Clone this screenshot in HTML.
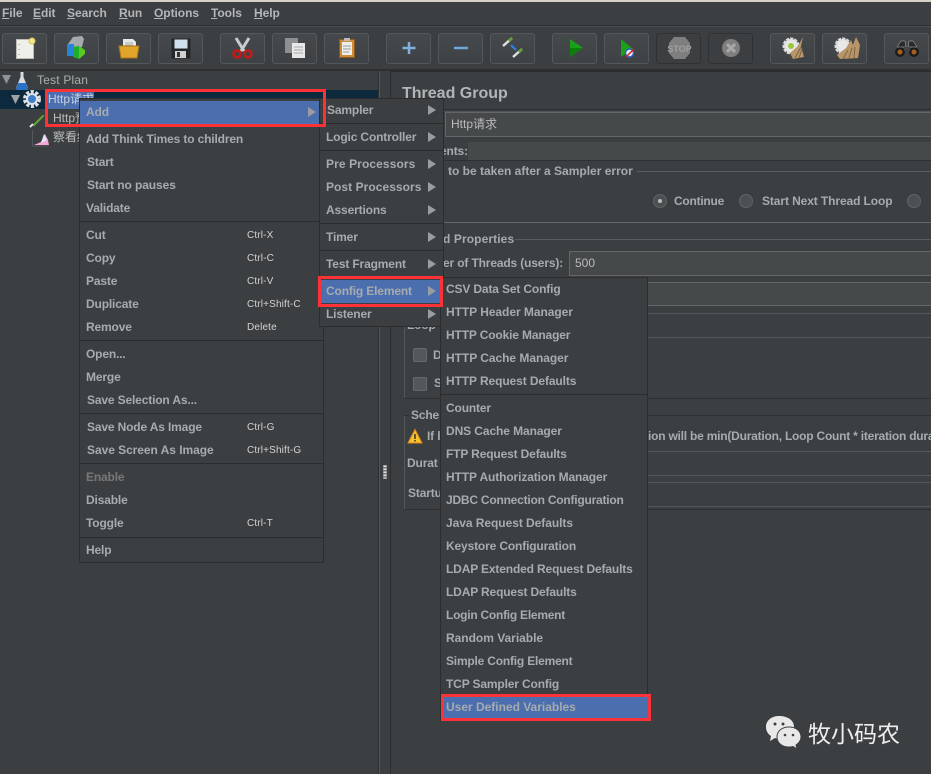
<!DOCTYPE html>
<html><head><meta charset="utf-8">
<style>
html,body{margin:0;padding:0;background:#3c3f41}
#r{position:relative;width:931px;height:774px;overflow:hidden;background:#3c3f41;font:bold 12px/16px "Liberation Sans","Noto Sans CJK SC",sans-serif;color:#a6abae;letter-spacing:-.15px}
#r div{position:absolute;box-sizing:border-box}
.t{white-space:nowrap;height:16px}
.b{width:45px;height:31px;top:33px;border:1px solid #54585b;border-radius:3px;background:linear-gradient(#45494c,#3f4245)}
.d{background:#3c3f41;border-color:#2f3133}
.l{height:1px;background:#5a5d5f}
.k{height:1px;background:#2d2f31}
.f{background:#45494a;border:1px solid #646667}
.n{font-weight:normal;color:#bbb;letter-spacing:0}
.m{background:#3c3f41;border:1px solid #2b2d2e}
.s{height:1px;background:#2b2d2e}
.sc{font:normal 10px/14px "Liberation Sans",sans-serif;color:#d2d2d2;white-space:nowrap;height:14px;letter-spacing:.15px}
.a{width:0;height:0;border-left:8px solid #9a9d9f;border-top:5px solid transparent;border-bottom:5px solid transparent}
.red{border:3px solid #fb3338}
.mn{font-size:12px;color:#b4b7b9;top:5px;font-weight:bold;letter-spacing:-.05px}
.mn u{text-underline-offset:1px}
</style></head><body><div id="r">
<div style="left:0;top:0;width:931px;height:2px;background:#d8d2c4"></div>
<div class="t mn" style="left:2px"><u>F</u>ile</div>
<div class="t mn" style="left:33px"><u>E</u>dit</div>
<div class="t mn" style="left:67px"><u>S</u>earch</div>
<div class="t mn" style="left:119px"><u>R</u>un</div>
<div class="t mn" style="left:154px"><u>O</u>ptions</div>
<div class="t mn" style="left:211px"><u>T</u>ools</div>
<div class="t mn" style="left:254px"><u>H</u>elp</div>
<div class="k" style="left:0;top:25px;width:931px"></div>
<div class="l" style="left:0;top:26px;width:931px;background:#4c5052"></div>

<div class="b" style="left:2px"></div><div class="b" style="left:54px"></div><div class="b" style="left:106px"></div><div class="b" style="left:158px"></div>
<div class="b" style="left:220px"></div><div class="b" style="left:272px"></div><div class="b" style="left:324px"></div>
<div class="b" style="left:386px"></div><div class="b" style="left:438px"></div><div class="b" style="left:490px"></div>
<div class="b" style="left:552px"></div><div class="b" style="left:604px"></div><div class="b d" style="left:656px"></div><div class="b d" style="left:708px"></div>
<div class="b" style="left:770px"></div><div class="b" style="left:822px"></div><div class="b" style="left:884px"></div>
<div style="left:0;top:69px;width:931px;height:2px;background:#2d2f31"></div>

<!-- tree -->
<div style="left:0;top:90px;width:379px;height:19px;background:#0d293e"></div>
<div style="left:47px;top:90px;width:47px;height:19px;background:#4b6eaf"></div>
<div style="left:379px;top:71px;width:1px;height:703px;background:#54575a"></div>
<div style="left:378px;top:71px;width:1px;height:703px;background:#2d2f31"></div>
<div style="left:390px;top:71px;width:1px;height:703px;background:#2b2d2e"></div>
<div style="left:391px;top:71px;width:540px;height:1px;background:#2b2d2e"></div>
<div class="t n" style="left:37px;top:72px;color:#a9b0a9;letter-spacing:.2px">Test Plan</div>
<div class="t n" style="left:48px;top:91px;color:#c8d0de">Http请求</div>
<div class="t n" style="left:53px;top:110px">Http预</div>
<div class="t n" style="left:53px;top:129px">察看结</div>

<!-- right panel -->
<div class="t" style="left:402px;top:85px;height:18px;line-height:18px;font-size:16px;color:#b3b6b8;letter-spacing:0">Thread Group</div>
<div class="k" style="left:391px;top:109px;width:540px"></div>
<div class="l" style="left:391px;top:111px;width:540px;background:#505356"></div>
<div class="f" style="left:445px;top:112px;width:490px;height:25px"></div>
<div class="t n" style="left:451px;top:116px">Http请求</div>
<div style="left:468px;top:142px;width:463px;height:18px;background:#45494a"></div>
<div class="k" style="left:391px;top:160px;width:540px"></div>
<div class="t" style="left:440px;top:143px">ents:</div>
<div class="t" style="left:448px;top:163px;letter-spacing:0">to be taken after a Sampler error</div>
<div class="l" style="left:637px;top:171px;width:294px"></div>
<div style="left:653px;top:194px;width:14px;height:14px;border-radius:50%;background:#4c5052;border:1px solid #5f6366"></div>
<div style="left:658px;top:199px;width:4px;height:4px;border-radius:50%;background:#bbb"></div>
<div class="t" style="left:674px;top:193px;letter-spacing:-.25px">Continue</div>
<div style="left:739px;top:194px;width:14px;height:14px;border-radius:50%;background:#4c5052;border:1px solid #5f6366"></div>
<div class="t" style="left:762px;top:193px;letter-spacing:-.1px">Start Next Thread Loop</div>
<div style="left:907px;top:194px;width:14px;height:14px;border-radius:50%;background:#4c5052;border:1px solid #5f6366"></div>
<div class="l" style="left:443px;top:222px;width:488px;background:#66696b"></div>
<div class="t" style="left:443px;top:231px;letter-spacing:.1px">d Properties</div>
<div class="l" style="left:515px;top:239px;width:416px"></div>
<div class="t" style="left:443px;top:255px">er of Threads (users):</div>
<div class="f" style="left:569px;top:251px;width:366px;height:25px"></div>
<div class="t n" style="left:575px;top:255px">500</div>
<div style="left:648px;top:282px;width:283px;height:24px;background:#45494a;border-top:1px solid #646667;border-bottom:1px solid #646667"></div>
<div style="left:648px;top:313px;width:283px;height:25px;border-top:1px solid #55585a;border-bottom:1px solid #55585a"></div>
<div style="left:404px;top:230px;width:1px;height:169px;background:#55585a"></div>
<div class="k" style="left:404px;top:398px;width:527px"></div>
<div class="t" style="left:407px;top:317px">Loop</div>
<div style="left:413px;top:348px;width:14px;height:14px;background:#54585a;border:1px solid #666a6c;border-radius:2px"></div>
<div class="t" style="left:433px;top:347px">D</div>
<div style="left:413px;top:377px;width:14px;height:14px;background:#54585a;border:1px solid #666a6c;border-radius:2px"></div>
<div class="t" style="left:434px;top:375px">S</div>
<div style="left:404px;top:415px;width:1px;height:95px;background:#55585a"></div>
<div class="k" style="left:404px;top:415px;width:527px"></div>
<div class="k" style="left:404px;top:509px;width:527px"></div>
<div class="t" style="left:409px;top:407px;background:#3c3f41;padding:0 2px">Sche</div>
<div class="t" style="left:427px;top:428px">If l</div>
<div class="t" style="left:648px;top:428px;letter-spacing:-.22px">ion will be min(Duration, Loop Count * iteration dura</div>
<div class="t" style="left:407px;top:455px">Durat</div>
<div class="t" style="left:408px;top:485px">Startu</div>
<div style="left:648px;top:451px;width:283px;height:25px;border-top:1px solid #55585a;border-bottom:1px solid #55585a"></div>
<div style="left:648px;top:482px;width:283px;height:25px;border-top:1px solid #55585a;border-bottom:1px solid #55585a"></div>

<svg width="931" height="774" style="position:absolute;left:0;top:0">
<!-- splitter dots -->
<path d="M383 465h4v14h-4z" fill="#77797b"/><path d="M385 465.500v13" stroke="#dcdcdc" stroke-dasharray="1.500 1.500" stroke-width="3"/>
<!-- warning -->
<path d="M415 429.500l7 13.500h-14z" fill="#f7c32c" stroke="#e08a1a"/><path d="M415 434v5M415 440v1.500" stroke="#333" stroke-width="1.500"/>
<!-- tree icons -->
<path d="M2 75h9l-4.500 9z" fill="#909395"/>
<path d="M11 95h9l-4.500 9z" fill="#a0a3a5"/>
<path d="M20.500 72h3v5l4 10q.5 3-2 3h-7q-2.500 0-2-3l4-10z" fill="#d8dde2"/><path d="M18 83h8l2 7h-12z" fill="#2a70c8"/>
<circle cx="32" cy="99" r="7" fill="none" stroke="#dde0e4" stroke-width="4" stroke-dasharray="3 1.500"/><circle cx="32" cy="99" r="6" fill="#dfe3e8"/><circle cx="32" cy="99" r="4" fill="#3d7fc8"/>
<path d="M32 125l10-10 3-1-1 3-10 10z" fill="#5d9a3a" stroke="#2a2a2a" stroke-width=".5"/><path d="M30 127l3-3" stroke="#ddd" stroke-width="2"/>
<path d="M32.500 130v16h16" fill="none" stroke="#55585a"/><path d="M34 145l7-3 4-8 3 6 1 5z" fill="#f3a8d8"/><path d="M41 143l3-9 3 6z" fill="#dfe8f5"/>
<!-- toolbar icons -->
<rect x="16.500" y="39.500" width="17" height="19" fill="#f0f0ea" stroke="#bcbcb4"/><circle cx="32" cy="41" r="3" fill="#f5e58a" stroke="#d8c45a"/><path d="M19 44v1M19 49v1M19 54v1" stroke="#888"/>
<path d="M68 44l5-7 9-1 2 3-2 8-14 3z" fill="#a4aaae"/><rect x="67" y="44" width="7" height="12" fill="#2786d8"/><path d="M73 47l6-1v13l-6-2z" fill="#1fae2a"/><path d="M79 46l6 4v4l-6 5z" fill="#5ac822"/>
<path d="M123 39h10l3 3v6h-13z" fill="#e8e8e8"/><path d="M125 43h8M125 45h8" stroke="#aaa"/><path d="M119 46h20l-2 12h-16z" fill="#e2a52c" stroke="#a87818"/>
<rect x="171.500" y="38.500" width="19" height="20" fill="#24272a" rx="1"/><rect x="174.500" y="39.500" width="13" height="9" fill="#cfe0ee"/><rect x="175" y="51" width="11" height="7" fill="#d0d0d0"/><rect x="177" y="52" width="3" height="5" fill="#333"/>
<path d="M236 38l8 13M249 38l-8 13" stroke="#c9ccce" stroke-width="3"/><circle cx="237" cy="54" r="3.500" fill="none" stroke="#c81818" stroke-width="2.500"/><circle cx="248" cy="54" r="3.500" fill="none" stroke="#c81818" stroke-width="2.500"/>
<rect x="285" y="38" width="13" height="15" fill="#8d9091"/><rect x="292" y="43" width="13" height="15" fill="#e8e8e8"/><path d="M294 47h9M294 50h9M294 53h9" stroke="#aaa"/>
<rect x="339.500" y="39.500" width="15" height="18" fill="#d18a3a" stroke="#8a5a20"/><rect x="342" y="42" width="10" height="13" fill="#eeeeea"/><rect x="344" y="38" width="6" height="3" fill="#bbb"/><path d="M343 46h8M343 49h8M343 52h6" stroke="#999"/>
<path d="M409 42v12M402.500 48h13" stroke="#7fb0e2" stroke-width="2.500"/>
<path d="M454 48h14" stroke="#6fa4dc" stroke-width="2.500"/>
<path d="M503 46l9-8" stroke="#ddd" stroke-width="2.500"/><path d="M509 41l3-3" stroke="#5e9e3e" stroke-width="3"/><path d="M513 57l9-8" stroke="#ddd" stroke-width="2.500"/><path d="M519 52l3-3" stroke="#5e9e3e" stroke-width="3"/><path d="M511 45l5 5" stroke="#2f7fe6" stroke-width="2"/>
<path d="M570 39l13 9-13 9z" fill="#1aa01a"/><path d="M570 48h13l-13 9z" fill="#0b7e0b"/>
<path d="M621 39l12 10-12 8z" fill="#1aa01a"/><circle cx="629.500" cy="53" r="4" fill="#eef" stroke="#2a60c8" stroke-width="1.500"/><path d="M626 57l8-8" stroke="#d82020" stroke-width="1.500"/>
<path d="M674 37h11l5 6v10l-5 6h-11l-5-6v-10z" fill="#7f7f7f"/><text x="679.500" y="52" font-size="9" font-weight="bold" fill="#a0a0a0" text-anchor="middle" font-family="Liberation Sans" letter-spacing="0">STOP</text>
<circle cx="731" cy="48" r="9" fill="#7f7f7f"/><path d="M727 44l8 8M735 44l-8 8" stroke="#a8a8a8" stroke-width="3"/>
<circle cx="791" cy="46" r="7" fill="#e8e8e8" stroke="#ddd" stroke-width="3" stroke-dasharray="3 1"/><circle cx="791" cy="46" r="3" fill="#9ac83a"/><path d="M803 37l-2 9 3 11-11 2-3-6 8-7z" fill="#b9966a"/><path d="M801 47l-6 11M802 49l-3 9" stroke="#7e6444"/>
<circle cx="843" cy="46" r="7" fill="#e8e8e8" stroke="#ddd" stroke-width="3" stroke-dasharray="3 1"/><path d="M856 37l-3 8-2-5-5 8-9 7 3 4 18-1 2-13z" fill="#b9966a"/><path d="M848 50l-5 9M852 48l-3 10M855 47l-1 11" stroke="#7e6444"/>
<circle cx="900" cy="52" r="5" fill="#1c1c1c"/><circle cx="914" cy="52" r="5" fill="#1c1c1c"/><path d="M897 47l4-6h4l1 6zM908 47l1-6h4l4 6z" fill="#2a2a2a" stroke="#bbb" stroke-width=".5"/><rect x="904" y="47" width="6" height="4" fill="#444"/><circle cx="900" cy="52" r="2.500" fill="#a8601e"/><circle cx="914" cy="52" r="2.500" fill="#a8601e"/>
</svg>

<!-- menu 1 -->
<div class="m" style="left:79px;top:98px;width:245px;height:465px"></div>
<div style="left:80px;top:101px;width:239px;height:23px;background:#4b6eaf"></div>
<div class="t" style="left:86px;top:104px">Add</div><div class="a" style="left:308px;top:107px"></div>
<div class="t" style="left:86px;top:131px">Add Think Times to children</div>
<div class="t" style="left:87px;top:154px">Start</div>
<div class="t" style="left:87px;top:177px;letter-spacing:-.08px">Start no pauses</div>
<div class="t" style="left:86px;top:200px">Validate</div>
<div class="s" style="left:80px;top:221px;width:243px"></div>
<div class="t" style="left:86px;top:227px">Cut</div><div class="sc" style="left:247px;top:229px">Ctrl-X</div>
<div class="t" style="left:86px;top:250px">Copy</div><div class="sc" style="left:247px;top:252px">Ctrl-C</div>
<div class="t" style="left:86px;top:273px">Paste</div><div class="sc" style="left:247px;top:275px">Ctrl-V</div>
<div class="t" style="left:86px;top:296px">Duplicate</div><div class="sc" style="left:247px;top:298px">Ctrl+Shift-C</div>
<div class="t" style="left:86px;top:319px">Remove</div><div class="sc" style="left:247px;top:321px">Delete</div>
<div class="s" style="left:80px;top:340px;width:243px"></div>
<div class="t" style="left:86px;top:346px">Open...</div>
<div class="t" style="left:86px;top:369px">Merge</div>
<div class="t" style="left:87px;top:392px">Save Selection As...</div>
<div class="s" style="left:80px;top:413px;width:243px"></div>
<div class="t" style="left:87px;top:419px">Save Node As Image</div><div class="sc" style="left:247px;top:421px">Ctrl-G</div>
<div class="t" style="left:87px;top:442px;letter-spacing:-.05px">Save Screen As Image</div><div class="sc" style="left:247px;top:444px">Ctrl+Shift-G</div>
<div class="s" style="left:80px;top:463px;width:243px"></div>
<div class="t" style="left:86px;top:469px;color:#777">Enable</div>
<div class="t" style="left:86px;top:492px">Disable</div>
<div class="t" style="left:86px;top:515px">Toggle</div><div class="sc" style="left:247px;top:517px">Ctrl-T</div>
<div class="s" style="left:80px;top:537px;width:243px"></div>
<div class="t" style="left:86px;top:542px">Help</div>

<!-- menu 2 -->
<div class="m" style="left:319px;top:98px;width:125px;height:229px"></div>
<div class="t" style="left:327px;top:102px">Sampler</div><div class="a" style="left:428px;top:105px"></div>
<div class="s" style="left:320px;top:123px;width:123px"></div>
<div class="t" style="left:326px;top:129px">Logic Controller</div><div class="a" style="left:428px;top:132px"></div>
<div class="s" style="left:320px;top:150px;width:123px"></div>
<div class="t" style="left:326px;top:156px;letter-spacing:.1px">Pre Processors</div><div class="a" style="left:428px;top:159px"></div>
<div class="t" style="left:326px;top:179px;letter-spacing:.05px">Post Processors</div><div class="a" style="left:428px;top:182px"></div>
<div class="t" style="left:326px;top:202px">Assertions</div><div class="a" style="left:428px;top:205px"></div>
<div class="s" style="left:320px;top:223px;width:123px"></div>
<div class="t" style="left:326px;top:229px">Timer</div><div class="a" style="left:428px;top:232px"></div>
<div class="s" style="left:320px;top:250px;width:123px"></div>
<div class="t" style="left:326px;top:256px">Test Fragment</div><div class="a" style="left:428px;top:259px"></div>
<div style="left:321px;top:280px;width:119px;height:23px;background:#4b6eaf"></div>
<div class="t" style="left:326px;top:283px">Config Element</div><div class="a" style="left:428px;top:286px"></div>
<div class="t" style="left:326px;top:306px">Listener</div><div class="a" style="left:428px;top:309px"></div>

<!-- menu 3 -->
<div class="m" style="left:440px;top:277px;width:208px;height:444px"></div>
<div class="t" style="left:446px;top:281px">CSV Data Set Config</div>
<div class="t" style="left:446px;top:304px;letter-spacing:-.05px">HTTP Header Manager</div>
<div class="t" style="left:446px;top:327px">HTTP Cookie Manager</div>
<div class="t" style="left:446px;top:350px;letter-spacing:-.04px">HTTP Cache Manager</div>
<div class="t" style="left:446px;top:373px;letter-spacing:-.1px">HTTP Request Defaults</div>
<div class="s" style="left:441px;top:394px;width:206px"></div>
<div class="t" style="left:446px;top:400px">Counter</div>
<div class="t" style="left:446px;top:423px;letter-spacing:-.09px">DNS Cache Manager</div>
<div class="t" style="left:446px;top:446px">FTP Request Defaults</div>
<div class="t" style="left:446px;top:469px;letter-spacing:-.11px">HTTP Authorization Manager</div>
<div class="t" style="left:446px;top:492px;letter-spacing:-.22px">JDBC Connection Configuration</div>
<div class="t" style="left:446px;top:515px;letter-spacing:-.05px">Java Request Defaults</div>
<div class="t" style="left:446px;top:538px">Keystore Configuration</div>
<div class="t" style="left:446px;top:561px">LDAP Extended Request Defaults</div>
<div class="t" style="left:446px;top:584px">LDAP Request Defaults</div>
<div class="t" style="left:446px;top:607px;letter-spacing:-.25px">Login Config Element</div>
<div class="t" style="left:446px;top:630px;letter-spacing:-.02px">Random Variable</div>
<div class="t" style="left:446px;top:653px;letter-spacing:-.2px">Simple Config Element</div>
<div class="t" style="left:446px;top:676px">TCP Sampler Config</div>
<div style="left:444px;top:697px;width:204px;height:21px;background:#4b6eaf"></div>
<div class="t" style="left:446px;top:699px;letter-spacing:-.01px">User Defined Variables</div>

<!-- red boxes -->
<div class="red" style="left:45px;top:89px;width:281px;height:38px"></div>
<div class="red" style="left:318px;top:276px;width:125px;height:31px"></div>
<div class="red" style="left:441px;top:694px;width:210px;height:27px"></div>

<!-- watermark -->
<svg width="40" height="36" style="position:absolute;left:764px;top:714px">
<path d="M15 2C7 2 2 7 2 13c0 4 2 7 5 9l-1 5 5-3c2 .6 3 .8 5 .8 8 0 14-5 14-12S23 2 15 2z" fill="#e8e8e8"/>
<path d="M25 13c-7 0-12 4-12 10s5 10 12 10c1 0 3 0 4-.5l4 2.500-1-4c3-2 5-5 5-8 0-6-5-10-12-10z" fill="#e8e8e8" stroke="#3c3f41"/>
<circle cx="11" cy="10" r="1.500" fill="#3c3f41"/><circle cx="19" cy="10" r="1.500" fill="#3c3f41"/><circle cx="21" cy="21" r="1.300" fill="#3c3f41"/><circle cx="29" cy="21" r="1.300" fill="#3c3f41"/>
</svg>
<div class="t" style="left:808px;top:718px;height:28px;font:normal 23px/28px 'Noto Sans CJK SC',sans-serif;color:#eee;letter-spacing:0">牧小码农</div>
</div></body></html>
